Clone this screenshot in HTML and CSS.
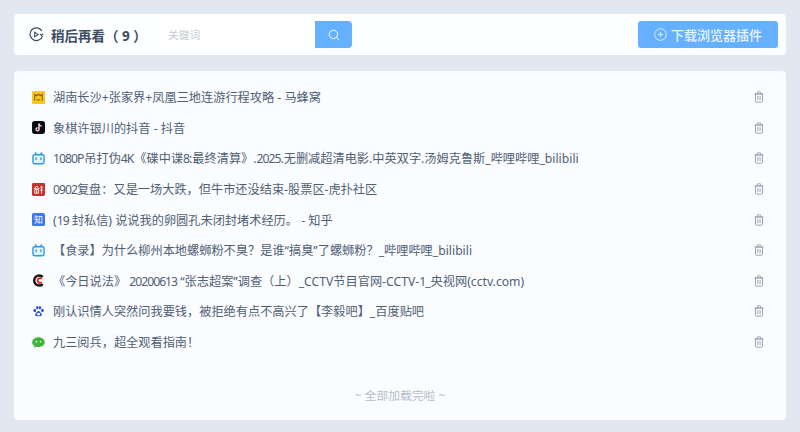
FILE: index.html
```html
<!DOCTYPE html>
<html lang="zh-CN">

<head>
    <meta charset="UTF-8">
    <title>稍后再看</title>
    <link rel="stylesheet" href="styles.css">
</head>

<body>
    <svg class="defs" width="0" height="0">
        <symbol id="trash" viewBox="0 0 12 12">
            <path d="M2.500 3h7v7.200a1 1 0 0 1-1 1h-5a1 1 0 0 1-1-1z M1.500 3h9 M4.300 3V1.300a.5.5 0 0 1 .5-.5h2.400a.5.5 0 0 1 .5.5V3 M4.900 5v4.200 M7.100 5v4.200" fill="none" stroke="currentColor" stroke-width="1"/>
        </symbol>
        <symbol id="bili" viewBox="0 0 14 14">
            <path d="M3.600 .8l2 2.200 M10.400 .8l-2 2.200" fill="none" stroke="#2f9be0" stroke-width="1.300" stroke-linecap="round"/>
            <rect x="1" y="3" width="12" height="9.600" rx="1.800" fill="#e4f3fc" stroke="#2f9be0" stroke-width="1.500"/>
            <path d="M4.400 6.400v1.800 M9.600 6.400v1.800" stroke="#2f9be0" stroke-width="1.500" stroke-linecap="round"/>
        </symbol>
    </svg>

    <div class="topbar">
        <div class="title">
            <svg class="title-icon" width="15" height="15" viewBox="0 0 14 14">
                <path d="M12.600 8.200A5.900 5.900 0 1 1 12 3.800" fill="none" stroke="#3d4d63" stroke-width="1.100"/>
                <path d="M13.200 6.400l-1.600 1.500-1.400-1.600" fill="none" stroke="#3d4d63" stroke-width="1"/>
                <path d="M5.300 4.800l3.200 2.100-3.200 2.100z" fill="none" stroke="#3d4d63" stroke-width="1"/>
            </svg>
            <span>稍后再看（ 9 ）</span>
        </div>
        <div class="search">
            <input class="search-input" type="text" placeholder="关键词">
            <button class="search-btn">
                <svg width="12" height="12" viewBox="0 0 12 12">
                    <circle cx="5.400" cy="5.400" r="4.200" fill="none" stroke="#fff" stroke-width="1"/>
                    <path d="M8.500 8.600l2.300 2.200" stroke="#fff" stroke-width="1" stroke-linecap="round"/>
                </svg>
            </button>
        </div>
        <button class="download">
            <svg width="13" height="13" viewBox="0 0 13 13">
                <circle cx="6.500" cy="6.500" r="5.800" fill="none" stroke="#e3f1ff" stroke-width="0.900"/>
                <path d="M6.500 4v5 M4 6.500h5" stroke="#e3f1ff" stroke-width="0.900"/>
            </svg>
            <span>下载浏览器插件</span>
        </button>
    </div>

    <div class="panel">
        <ul class="list">
            <li class="row">
                <svg class="favicon" viewBox="0 0 14 14">
                    <rect width="14" height="14" rx="1" fill="#fbc814"/>
                    <path d="M3 10.500V3.500l2.200 1.800L7 3.500l1.800 1.800L11 3.500v7 M5 9.300q2 1 4 0" fill="none" stroke="#7a5a1a" stroke-width="1.100"/>
                </svg>
                <span class="name">湖南长沙+张家界+凤凰三地连游行程攻略 - 马蜂窝</span>
                <svg class="trash"><use href="#trash"/></svg>
            </li>
            <li class="row">
                <svg class="favicon" viewBox="0 0 14 14">
                    <rect width="14" height="14" rx="3" fill="#0b0b12"/>
                    <path d="M7.400 2.800v6.100a1.600 1.600 0 1 1-1.600-1.600 M7.400 2.800c.2 1.400 1.200 2.300 2.600 2.400" fill="none" stroke="#25f4ee" stroke-width="1.100"/>
                    <path d="M7.800 3.100v6.100a1.600 1.600 0 1 1-1.600-1.600 M7.800 3.100c.2 1.400 1.200 2.300 2.600 2.400" fill="none" stroke="#fe2c55" stroke-width="1.100"/>
                    <path d="M7.600 3v6a1.600 1.600 0 1 1-1.600-1.600 M7.600 3c.2 1.400 1.200 2.300 2.600 2.400" fill="none" stroke="#fff" stroke-width="1"/>
                </svg>
                <span class="name">象棋许银川的抖音 - 抖音</span>
                <svg class="trash"><use href="#trash"/></svg>
            </li>
            <li class="row">
                <svg class="favicon" viewBox="0 0 14 14"><use href="#bili"/></svg>
                <span class="name"><span class="num">1080</span>P吊打伪<span class="num">4</span>K《碟中谍<span class="num">8</span>:最终清算》.<span class="num">2025</span>.无删减超清电影.中英双字.汤姆克鲁斯_哔哩哔哩_bilibili</span>
                <svg class="trash"><use href="#trash"/></svg>
            </li>
            <li class="row">
                <svg class="favicon" viewBox="0 0 14 14">
                    <rect width="14" height="14" rx="1.500" fill="#c9302c"/>
                    <path d="M2.300 6.200L5 3.200l2.700 3z M3 7.200h4V11H3z M5 7.200V11 M8.800 4.200l3 .6 M10.300 3v8.500 M8.600 7.500h3.300" fill="none" stroke="#fbe9e4" stroke-width="1"/>
                </svg>
                <span class="name"><span class="num">0902</span>复盘：又是一场大跌，但牛市还没结束-股票区-虎扑社区</span>
                <svg class="trash"><use href="#trash"/></svg>
            </li>
            <li class="row">
                <svg class="favicon" viewBox="0 0 14 14">
                    <rect width="14" height="14" rx="2" fill="#3b78ea"/>
                    <text class="favicon-text" x="7" y="11">知</text>
                </svg>
                <span class="name">(<span class="num">19</span> 封私信) 说说我的卵圆孔未闭封堵术经历。 - 知乎</span>
                <svg class="trash"><use href="#trash"/></svg>
            </li>
            <li class="row">
                <svg class="favicon" viewBox="0 0 14 14"><use href="#bili"/></svg>
                <span class="name">【食录】为什么柳州本地螺蛳粉不臭？是谁“搞臭”了螺蛳粉？_哔哩哔哩_bilibili</span>
                <svg class="trash"><use href="#trash"/></svg>
            </li>
            <li class="row">
                <svg class="favicon" viewBox="0 0 14 14">
                    <path d="M11.600 3.200A5.400 5.400 0 1 0 11.600 10.800" fill="none" stroke="#16161c" stroke-width="2.600"/>
                    <path d="M10.600 5.200A2.600 2.600 0 1 0 10.600 8.800" fill="none" stroke="#d8261f" stroke-width="2"/>
                </svg>
                <span class="name">《今日说法》 <span class="num">20200613</span> “张志超案”调查（上）_CCTV节目官网-CCTV-<span class="num">1</span>_央视网(cctv.com)</span>
                <svg class="trash"><use href="#trash"/></svg>
            </li>
            <li class="row">
                <svg class="favicon" viewBox="0 0 14 14" fill="#3554d8">
                    <ellipse cx="3" cy="6" rx="1.500" ry="1.900"/>
                    <ellipse cx="5.700" cy="2.900" rx="1.400" ry="1.800"/>
                    <ellipse cx="8.600" cy="2.900" rx="1.400" ry="1.800"/>
                    <ellipse cx="11.200" cy="6" rx="1.500" ry="1.900"/>
                    <path d="M7 6.400c-1.600 0-2 1.600-3 2.600-1.200 1.200-.6 3.200 1.200 3.200.7 0 1.200-.3 1.800-.3s1.100.3 1.800.3c1.800 0 2.400-2 1.200-3.200-1-1-1.400-2.600-3-2.600z"/>
                    <rect x="5.600" y="8.600" width="3" height="2.400" rx=".6" fill="#fff"/>
                </svg>
                <span class="name">刚认识情人突然问我要钱，被拒绝有点不高兴了【李毅吧】_百度贴吧</span>
                <svg class="trash"><use href="#trash"/></svg>
            </li>
            <li class="row">
                <svg class="favicon" viewBox="0 0 14 14">
                    <path d="M7 1.300C3.300 1.300.2 3.700.2 6.800c0 1.700 1 3.200 2.500 4.100l-.4 2 2.400-1.300c.7.200 1.500.3 2.300.3 3.700 0 6.800-2.300 6.800-5.100S10.700 1.300 7 1.300z" fill="#3fb53a"/>
                    <circle cx="4.800" cy="6" r=".9" fill="#fff"/>
                    <circle cx="9.200" cy="6" r=".9" fill="#fff"/>
                </svg>
                <span class="name">九三阅兵，超全观看指南！</span>
                <svg class="trash"><use href="#trash"/></svg>
            </li>
        </ul>
        <p class="end">~ 全部加载完啦 ~</p>
    </div>
</body>

</html>
```

FILE: styles.css
```css
* {
    box-sizing: border-box;
}

body {
    margin: 0;
    padding: 14px;
    height: 432px;
    overflow: hidden;
    display: flex;
    flex-direction: column;
    gap: 16px;
    background-color: #e2e8f1;
    font-family: "Noto Sans", "Noto Sans CJK SC", sans-serif;
    font-size: 12px;
    color: #4f6075;
}

.defs {
    display: none;
}

.topbar {
    height: 41px;
    flex: none;
    padding: 0 8px 0 15px;
    display: flex;
    align-items: center;
    background: #fdfeff;
    border-radius: 4px;
}

.title {
    width: 131px;
    display: flex;
    align-items: center;
    gap: 7px;
    font-size: 13.500px;
    font-weight: 700;
    white-space: nowrap;
    color: #3d4d63;
}

.title-icon {
    flex: none;
}

.search {
    display: flex;
    height: 27px;
}

.search-input {
    width: 155px;
    height: 27px;
    padding: 0 8px;
    border: none;
    outline: none;
    background: #fff;
    font-family: inherit;
    font-size: 10.700px;
}

.search-input::placeholder {
    color: #c5ccd6;
}

.search-btn {
    width: 37px;
    padding: 0;
    display: flex;
    align-items: center;
    justify-content: center;
    border: none;
    border-radius: 0 4px 4px 0;
    background: #66b1ff;
}

.download {
    width: 140px;
    height: 27px;
    margin-left: auto;
    padding: 0;
    display: flex;
    align-items: center;
    justify-content: center;
    gap: 4px;
    border: none;
    border-radius: 3px;
    background: #66b1ff;
    color: #e9f4ff;
    font-family: inherit;
    font-size: 13px;
    font-weight: 500;
}

.panel {
    height: 349px;
    flex: none;
    padding: 11px 17px 0;
    display: flex;
    flex-direction: column;
    background: #fbfcfe;
    border-radius: 4px;
}

.list {
    margin: 0;
    padding: 0;
    list-style: none;
}

.row {
    height: 30.600px;
    display: flex;
    align-items: center;
}

.favicon {
    width: 13px;
    height: 13px;
    margin-left: 1px;
    flex: none;
}

.favicon-text {
    font-family: "Noto Sans CJK SC", sans-serif;
    font-size: 9.500px;
    text-anchor: middle;
    fill: #fff;
}

.name {
    margin-left: 8px;
    white-space: nowrap;
    color: #4f6075;
    font-size: 12.200px;
}

.num {
    letter-spacing: -1px;
}

.trash {
    width: 12px;
    height: 12px;
    margin-left: auto;
    margin-right: 4px;
    flex: none;
    color: #9aa5b3;
}

.end {
    margin: 29px 0 0;
    text-align: center;
    font-size: 11.800px;
    color: #b4bcc8;
}
```
